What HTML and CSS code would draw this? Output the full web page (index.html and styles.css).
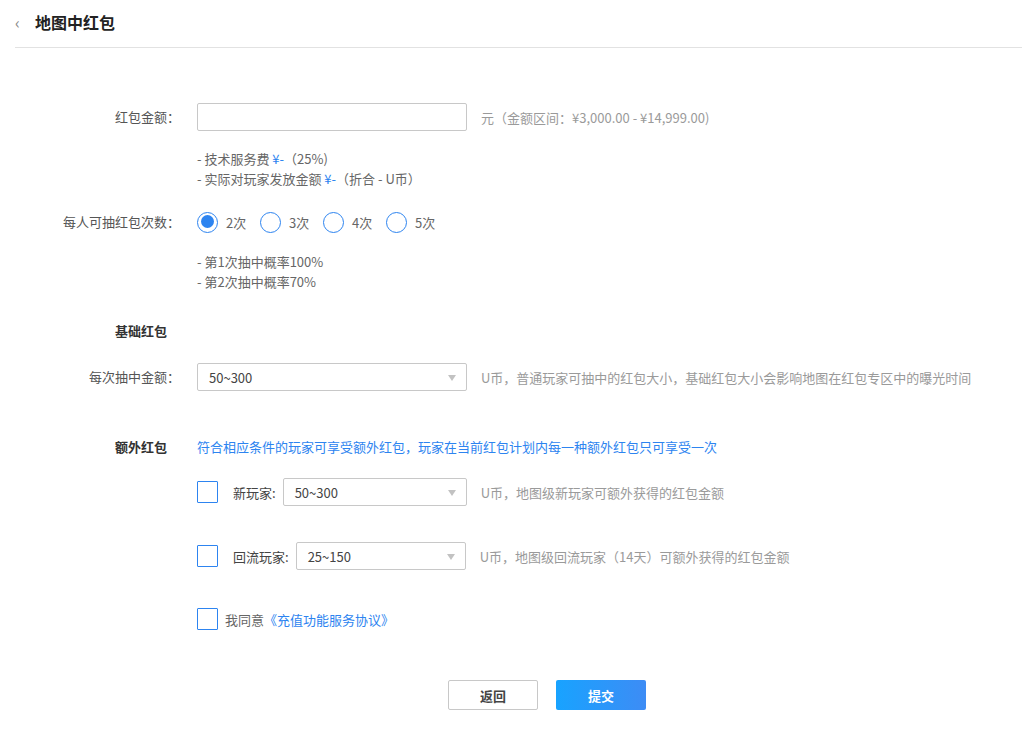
FILE: index.html
```html
<!DOCTYPE html>
<html lang="zh">
<head>
  <meta charset="UTF-8">
  <title>地图中红包</title>
  <link rel="stylesheet" href="styles.css">
</head>
<body>

  <div class="header">
    <span class="back">&lsaquo;</span>
    <span class="title">地图中红包</span>
  </div>

  <div class="form">
    <div class="row amount-row">
      <div class="label">红包金额：</div>
      <div class="field">
        <input class="input" type="text">
        <span class="tip">元（金额区间：¥3,000.00 - ¥14,999.00)</span>
      </div>
    </div>
    <div class="row notes notes-1">
      <div class="label"></div>
      <div class="field-col">
        <div>- 技术服务费 <span class="blue">¥-</span>（25%)</div>
        <div>- 实际对玩家发放金额 <span class="blue">¥-</span>（折合 - U币）</div>
      </div>
    </div>

    <div class="row radio-row">
      <div class="label">每人可抽红包次数：</div>
      <div class="field radios">
        <label class="radio checked"><span class="dot"></span>2次</label>
        <label class="radio"><span class="dot"></span>3次</label>
        <label class="radio"><span class="dot"></span>4次</label>
        <label class="radio"><span class="dot"></span>5次</label>
      </div>
    </div>
    <div class="row notes notes-2">
      <div class="label"></div>
      <div class="field-col">
        <div>- 第1次抽中概率100%</div>
        <div>- 第2次抽中概率70%</div>
      </div>
    </div>

    <div class="section">基础红包</div>

    <div class="row base-row">
      <div class="label">每次抽中金额：</div>
      <div class="field">
        <div class="select wide"><span>50~300</span><i class="caret"></i></div>
        <span class="tip">U币，普通玩家可抽中的红包大小，基础红包大小会影响地图在红包专区中的曝光时间</span>
      </div>
    </div>

    <div class="row extra-head">
      <div class="section-inline">额外红包</div>
      <div class="field blue">符合相应条件的玩家可享受额外红包，玩家在当前红包计划内每一种额外红包只可享受一次</div>
    </div>

    <div class="row extra-row new-row">
      <div class="label"></div>
      <div class="field">
        <span class="check"></span>
        <span class="sub-label">新玩家:</span>
        <div class="select new"><span>50~300</span><i class="caret"></i></div>
        <span class="tip">U币，地图级新玩家可额外获得的红包金额</span>
      </div>
    </div>

    <div class="row extra-row back-row">
      <div class="label"></div>
      <div class="field">
        <span class="check"></span>
        <span class="sub-label">回流玩家:</span>
        <div class="select ret"><span>25~150</span><i class="caret"></i></div>
        <span class="tip">U币，地图级回流玩家（14天）可额外获得的红包金额</span>
      </div>
    </div>

    <div class="row agree-row">
      <div class="label"></div>
      <div class="field">
        <span class="check"></span>
        <span class="agree">我同意<span class="blue">《充值功能服务协议》</span></span>
      </div>
    </div>

    <div class="actions">
      <button class="btn">返回</button>
      <button class="btn primary">提交</button>
    </div>
  </div>

</body>
</html>
```

FILE: styles.css
```css
html, body {
  margin: 0; padding: 0;
  background: #fff;
  font-family: "Noto Sans CJK SC", "Open Sans", sans-serif;
  font-size: 13px; color: #555;
}
.header {
  margin-left: 15px;
  height: 47px;
  border-bottom: 1px solid #e2e2e2;
  display: flex; align-items: center;
}
.back { color: #888; font-size: 16px; width: 20px; margin-top: -4px; }
.title { font-size: 16px; font-weight: bold; color: #222; margin-top: -4px; }

.form { padding-top: 55px; }
.row { display: flex; align-items: center; }
.label {
  width: 180px; flex: none;
  text-align: right; color: #555;
  line-height: 28px;
}
.field { margin-left: 17px; display: flex; align-items: center; }
.field-col { margin-left: 17px; line-height: 20px; color: #666; }

.input {
  width: 270px; height: 28px; box-sizing: border-box;
  border: 1px solid #c8c8c8; border-radius: 2px;
  outline: none; margin: 0; padding: 0 8px;
}
.tip { color: #9a9a9a; margin-left: 14px; }
.blue { color: #2d84f0; }

.notes-1 { margin-top: 18px; }
.radio-row { margin-top: 19px; }
.radio {
  display: flex; align-items: center;
  width: 63px; color: #666;
}
.dot {
  width: 21px; height: 21px; box-sizing: border-box;
  border: 1.5px solid #2d84f0; border-radius: 50%;
  margin-right: 8px; position: relative;
}
.radio.checked .dot::after {
  content: ""; position: absolute;
  left: 2.5px; top: 2.5px; width: 13px; height: 13px;
  border-radius: 50%; background: #2d84f0;
}
.notes-2 { margin-top: 16px; }

.section {
  margin: 29px 0 0 115px;
  font-weight: bold; color: #333;
  line-height: 20px;
}
.base-row { margin-top: 22px; }

.select {
  height: 28px; box-sizing: border-box;
  border: 1px solid #c8c8c8; border-radius: 2px;
  display: flex; align-items: center; justify-content: space-between;
  padding: 0 10px 0 11px; color: #444;
}
.select.wide { width: 270px; }
.select.new { width: 184px; }
.select.ret { width: 170px; }
.caret {
  width: 0; height: 0;
  border-left: 4px solid transparent; border-right: 4px solid transparent;
  border-top: 6px solid #c2c2c2;
  margin-top: 2px;
}

.extra-head { margin-top: 46px; line-height: 20px; }
.section-inline {
  width: 115px; flex: none; box-sizing: border-box;
  padding-left: 115px; white-space: nowrap;
  font-weight: bold; color: #333;
}
.extra-head .field { margin-left: 82px; }

.check {
  width: 21px; height: 22px; box-sizing: border-box;
  border: 1.5px solid #2d84f0; border-radius: 1px;
  display: inline-block; flex: none;
}
.sub-label { margin: 0 7px 0 15px; color: #444; }
.new-row { margin-top: 21px; }
.back-row { margin-top: 36px; }
.agree-row { margin-top: 38px; }
.agree { margin-left: 7px; color: #666; }

.actions {
  display: flex; gap: 18px;
  margin: 50px 0 30px 448px;
}
.btn {
  width: 90px; height: 30px; margin: 0;
  border: 1px solid #c8c8c8; border-radius: 2px;
  background: #fff; color: #444;
  font-family: inherit; font-size: 13px; font-weight: bold;
}
.btn.primary {
  border: none;
  background: linear-gradient(to right, #18a3ff, #3d8cf5);
  color: #fff;
}
```
